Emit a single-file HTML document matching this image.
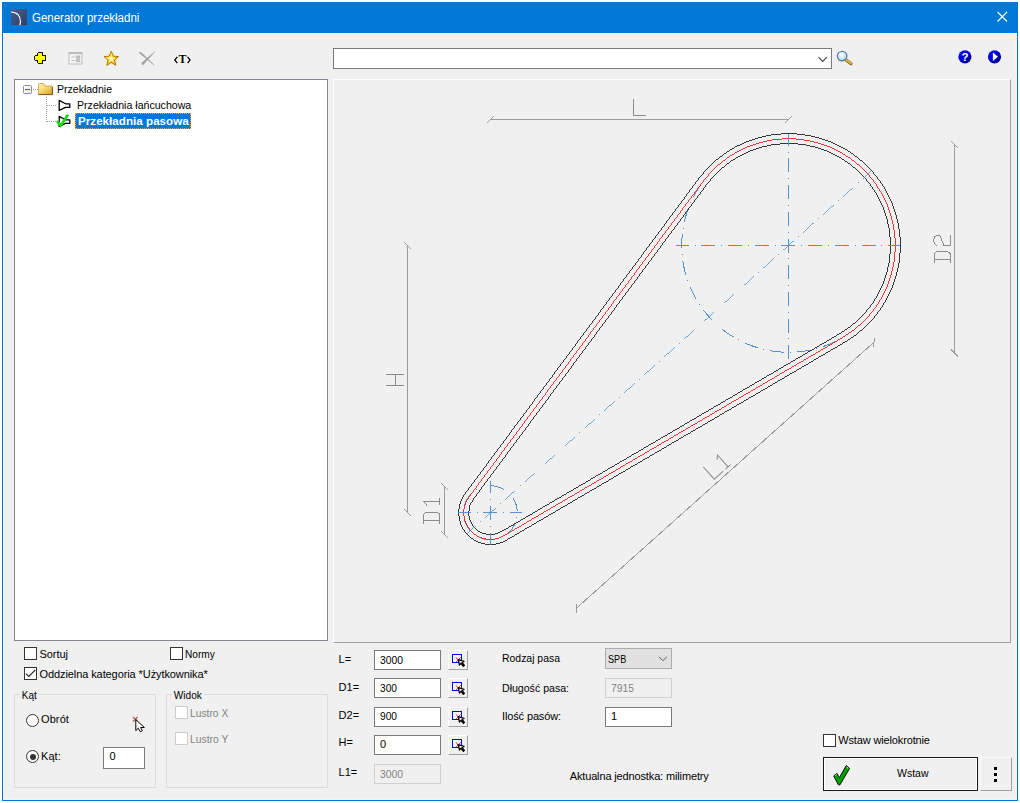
<!DOCTYPE html>
<html lang="pl">
<head>
<meta charset="utf-8">
<title>Generator przekładni</title>
<style>
*{box-sizing:border-box;margin:0;padding:0}
html,body{width:1020px;height:803px;overflow:hidden;background:#fff}
body{font-family:"Liberation Sans",sans-serif;font-size:11px;color:#000;position:relative}
.a{position:absolute}
.t{position:absolute;white-space:nowrap}
.edit{position:absolute;background:#fff;border:1px solid #7a7a7a}
.edit.ro{background:#f0f0f0;border-color:#d0d0d0}
.cb{position:absolute;width:13px;height:13px;background:#fff;border:1px solid #333}
.cb.d{border-color:#cccccc}
.rb{position:absolute;width:13px;height:13px;border-radius:50%;background:#fff;border:1px solid #333}
.grp{position:absolute;border:1px solid #dcdcdc}
.sbtn{position:absolute;width:20px;height:20px;background:#f0f0f0;border:1px solid;border-color:#fff #a0a0a0 #a0a0a0 #fff}
svg{position:absolute;overflow:visible}
</style>
</head>
<body>
<!-- window frame -->
<div class="a" style="left:2px;top:2px;width:1016px;height:799px;background:#f0f0f0;border:1px solid #0078d7"></div>
<div class="a" style="left:2px;top:2px;width:1016px;height:31px;background:#0078d7"></div>
<div class="a" style="left:3px;top:33px;width:1014px;height:1px;background:#fbf9f7"></div>
<div class="a" style="left:1015px;top:34px;width:2px;height:766px;background:#f5f2f0"></div>
<div class="a" style="left:3px;top:798px;width:1014px;height:2px;background:#f5f2f0"></div>

<!-- tree panel -->
<div class="a" style="left:14px;top:79px;width:314px;height:562px;background:#fff;border:1px solid #828790"></div>
<!-- selected row -->
<div class="a" style="left:75px;top:113px;width:116px;height:16px;background:#0078d7;outline:1px dotted #e8a060;outline-offset:-1px"></div>

<!-- search combo -->
<div class="a" style="left:333px;top:48px;width:499px;height:21px;background:#fff;border:1px solid #7a7a7a"></div>

<!-- drawing panel -->
<div class="a" style="left:333px;top:79px;width:678px;height:564px;background:#f0f0f0;border:1px solid;border-color:#fff #a0a0a0 #a0a0a0 #fff"></div>

<!-- left-bottom controls -->
<div class="cb" style="left:24px;top:647px"></div>
<div class="cb" style="left:170px;top:647px"></div>
<div class="cb" style="left:24px;top:667px"></div>
<div class="grp" style="left:14px;top:694px;width:142px;height:94px"></div>
<div class="grp" style="left:166px;top:694px;width:162px;height:94px"></div>
<div class="rb" style="left:26px;top:714px"></div>
<div class="rb" style="left:26px;top:750px"></div>
<div class="a" style="left:29.5px;top:753.5px;width:6.4px;height:6.4px;border-radius:50%;background:#333"></div>
<div class="edit" style="left:103px;top:747px;width:42px;height:22px"></div>
<div class="cb d" style="left:174.5px;top:706px"></div>
<div class="cb d" style="left:174.5px;top:731.5px"></div>

<!-- parameter inputs -->
<div class="edit" style="left:374px;top:650px;width:67px;height:20px"></div>
<div class="edit" style="left:374px;top:678px;width:67px;height:20px"></div>
<div class="edit" style="left:374px;top:707px;width:67px;height:20px"></div>
<div class="edit" style="left:374px;top:735px;width:67px;height:20px"></div>
<div class="edit ro" style="left:374px;top:764px;width:67px;height:20px"></div>
<div class="sbtn" style="left:448px;top:650px"></div>
<div class="sbtn" style="left:448px;top:678px"></div>
<div class="sbtn" style="left:448px;top:707px"></div>
<div class="sbtn" style="left:448px;top:735px"></div>

<!-- belt settings -->
<div class="a" style="left:605px;top:648px;width:67px;height:21px;background:#e1e1e1;border:1px solid #adadad"></div>
<div class="edit ro" style="left:605px;top:678px;width:67px;height:20px"></div>
<div class="edit" style="left:605px;top:707px;width:67px;height:20px"></div>

<!-- insert -->
<div class="cb" style="left:823px;top:734px"></div>
<div class="a" style="left:823px;top:757px;width:155px;height:34px;background:#f0f0f0;border:1px solid #1a1a1a;box-shadow:inset 0 0 0 1px #fff"></div>
<div class="a" style="left:980px;top:757px;width:32px;height:34px;background:#f0f0f0;border:1px solid;border-color:#fbfbfb #a0a0a0 #a0a0a0 #fbfbfb"></div>
<div class="a" style="left:994px;top:767px;width:3px;height:3px;background:#000"></div>
<div class="a" style="left:994px;top:773px;width:3px;height:3px;background:#000"></div>
<div class="a" style="left:994px;top:779px;width:3px;height:3px;background:#000"></div>

<!-- text -->
<div class="t" style="left:32.4px;top:10.8px;font-size:12px;line-height:14px;color:#fff;transform:scaleX(0.958);transform-origin:0 0;">Generator przekładni</div>
<div class="t" style="left:57.2px;top:82.5px;font-size:11px;line-height:13px;transform:scaleX(0.957);transform-origin:0 0;">Przekładnie</div>
<div class="t" style="left:76.6px;top:98.6px;font-size:11px;line-height:13px;transform:scaleX(0.963);transform-origin:0 0;">Przekładnia łańcuchowa</div>
<div class="t" style="left:78.0px;top:114.2px;font-size:11.6px;line-height:13.6px;letter-spacing:0.03px;font-weight:700;color:#fff;">Przekładnia pasowa</div>
<div class="t" style="left:39.5px;top:648.0px;font-size:11px;line-height:13px;letter-spacing:-0.07px;">Sortuj</div>
<div class="t" style="left:185.0px;top:648.0px;font-size:11px;line-height:13px;transform:scaleX(0.920);transform-origin:0 0;">Normy</div>
<div class="t" style="left:39.5px;top:667.5px;font-size:11px;line-height:13px;letter-spacing:-0.09px;">Oddzielna kategoria *Użytkownika*</div>
<div class="t" style="left:22.4px;top:688.5px;font-size:11px;line-height:13px;transform:scaleX(0.908);transform-origin:0 0;background:#f0f0f0;padding:0 2px;margin-left:-2px">Kąt</div>
<div class="t" style="left:174.0px;top:688.5px;font-size:11px;line-height:13px;transform:scaleX(0.916);transform-origin:0 0;background:#f0f0f0;padding:0 2px;margin-left:-2px">Widok</div>
<div class="t" style="left:41.0px;top:713.4px;font-size:11px;line-height:13px;letter-spacing:0.10px;">Obrót</div>
<div class="t" style="left:41.0px;top:749.7px;font-size:11px;line-height:13px;letter-spacing:0.06px;">Kąt:</div>
<div class="t" style="left:109.5px;top:749.7px;font-size:11px;line-height:13px;">0</div>
<div class="t" style="left:189.6px;top:707.0px;font-size:11px;line-height:13px;color:#838383;transform:scaleX(0.935);transform-origin:0 0;">Lustro X</div>
<div class="t" style="left:189.6px;top:732.5px;font-size:11px;line-height:13px;color:#838383;transform:scaleX(0.939);transform-origin:0 0;">Lustro Y</div>
<div class="t" style="left:338.6px;top:652.7px;font-size:11px;line-height:13px;letter-spacing:-0.02px;">L=</div>
<div class="t" style="left:338.6px;top:681.0px;font-size:11px;line-height:13px;">D1=</div>
<div class="t" style="left:338.6px;top:709.0px;font-size:11px;line-height:13px;">D2=</div>
<div class="t" style="left:338.6px;top:736.3px;font-size:11px;line-height:13px;letter-spacing:0.06px;">H=</div>
<div class="t" style="left:338.6px;top:766.1px;font-size:11px;line-height:13px;letter-spacing:-0.06px;">L1=</div>
<div class="t" style="left:380.0px;top:653.7px;font-size:11px;line-height:13px;transform:scaleX(0.939);transform-origin:0 0;">3000</div>
<div class="t" style="left:380.0px;top:681.9px;font-size:11px;line-height:13px;transform:scaleX(0.926);transform-origin:0 0;">300</div>
<div class="t" style="left:380.0px;top:710.4px;font-size:11px;line-height:13px;transform:scaleX(0.926);transform-origin:0 0;">900</div>
<div class="t" style="left:380.0px;top:738.3px;font-size:11px;line-height:13px;">0</div>
<div class="t" style="left:380.0px;top:767.7px;font-size:11px;line-height:13px;color:#838383;transform:scaleX(0.939);transform-origin:0 0;">3000</div>
<div class="t" style="left:502.0px;top:651.6px;font-size:11px;line-height:13px;transform:scaleX(0.948);transform-origin:0 0;">Rodzaj pasa</div>
<div class="t" style="left:502.0px;top:681.5px;font-size:11px;line-height:13px;transform:scaleX(0.961);transform-origin:0 0;">Długość pasa:</div>
<div class="t" style="left:502.0px;top:710.4px;font-size:11px;line-height:13px;letter-spacing:-0.13px;">Ilość pasów:</div>
<div class="t" style="left:608.0px;top:652.6px;font-size:11px;line-height:13px;transform:scaleX(0.827);transform-origin:0 0;">SPB</div>
<div class="t" style="left:611.0px;top:681.5px;font-size:11px;line-height:13px;color:#838383;transform:scaleX(0.939);transform-origin:0 0;">7915</div>
<div class="t" style="left:611.0px;top:710.4px;font-size:11px;line-height:13px;">1</div>
<div class="t" style="left:569.7px;top:770.1px;font-size:11px;line-height:13px;letter-spacing:-0.14px;">Aktualna jednostka: milimetry</div>
<div class="t" style="left:838.2px;top:734.0px;font-size:11px;line-height:13px;letter-spacing:-0.14px;">Wstaw wielokrotnie</div>
<div class="t" style="left:896.5px;top:767.3px;font-size:11px;line-height:13px;transform:scaleX(0.955);transform-origin:0 0;">Wstaw</div>
<!-- icons -->
<svg style="left:0;top:0" width="1020" height="803" viewBox="0 0 1020 803">
<defs>
<linearGradient id="gTi" x1="0" y1="0" x2="1" y2="1"><stop offset="0" stop-color="#4a5f92"/><stop offset="1" stop-color="#2c3d66"/></linearGradient>
<linearGradient id="gFo" x1="0" y1="0" x2="1" y2="1"><stop offset="0" stop-color="#fff3bf"/><stop offset=".5" stop-color="#f6d36a"/><stop offset="1" stop-color="#dc9a2a"/></linearGradient>
<linearGradient id="gSt" x1="0" y1="0" x2="1" y2="1"><stop offset="0" stop-color="#fff6a0"/><stop offset=".5" stop-color="#ffd21e"/><stop offset="1" stop-color="#e59a00"/></linearGradient>
<radialGradient id="gLe" cx=".4" cy=".35" r=".7"><stop offset="0" stop-color="#ffffff"/><stop offset="1" stop-color="#a9d3f0"/></radialGradient>
<linearGradient id="gBl" x1="0" y1="0" x2="1" y2="1"><stop offset="0" stop-color="#1010ff"/><stop offset=".55" stop-color="#0000d0"/><stop offset="1" stop-color="#000060"/></linearGradient>
<linearGradient id="gBx" x1="0" y1="0" x2="1" y2="1"><stop offset="0" stop-color="#ffffff"/><stop offset="1" stop-color="#e4e4e4"/></linearGradient>
</defs>

<!-- title icon -->
<rect x="11" y="9" width="16" height="16" fill="url(#gTi)"/>
<path d="M11,12 C17,12 20.5,16 20.5,21.5 C20.5,23 20.2,24 19.6,25" fill="none" stroke="#fff" stroke-width="1.2"/>
<!-- close X -->
<path d="M997.5,12 L1007,21.5 M1007,12 L997.5,21.5" stroke="#fff" stroke-width="1.1" fill="none"/>

<!-- toolbar: yellow plus -->
<g shape-rendering="crispEdges"><path d="M38,52 H42 L43,53 V55 H45 L46,56 V60 L45,61 H43 V63 L42,64 H38 L37,63 V61 H35 L34,60 V56 L35,55 H37 V53Z" fill="#15153a"/><path d="M38,53 H42 V56 H45 V60 H42 V63 H38 V60 H35 V56 H38Z" fill="#ffff00"/></g>
<!-- toolbar: disabled form icon -->
<g fill="none" stroke="#bcbcbc">
<rect x="69" y="52.5" width="13" height="11.5" fill="#f7f7f7"/>
<path d="M69,53.5 H82" stroke-width="1.3"/>
<path d="M71.5,57 H74.5 M71.5,60.5 H74.5"/>
<rect x="76.3" y="56" width="3.4" height="2.2" fill="#c4c4c4"/>
<rect x="76.3" y="59.6" width="3.4" height="2.2" fill="#c4c4c4"/>
</g>
<!-- toolbar: star -->
<path d="M111.3,51 L113.4,56.2 L118.6,56.6 L114.6,60 L115.9,65.4 L111.3,62.5 L106.7,65.4 L108,60 L104,56.6 L109.2,56.2Z" fill="url(#gSt)" stroke="#b47a00" stroke-width="1" stroke-linejoin="round"/>
<path d="M111.3,54.6 L112.5,57.4 L115.4,57.7 L113.2,59.6 L113.9,62.4 L111.3,60.8 L108.7,62.4 L109.4,59.6 L107.2,57.7 L110.1,57.4Z" fill="#fff8c8" fill-opacity=".85"/>
<!-- toolbar: disabled X -->
<path d="M139,51.9 L141.6,52.6 L154.7,65.2 L154.1,65.5 L139.6,53.4Z" fill="#a4a4a4"/>
<path d="M154.6,51.4 L154.9,52 L143.3,65 L141.2,64.5 L141.9,62.5Z" fill="#a4a4a4"/>
<!-- toolbar: <T> -->
<text x="182.4" y="63.4" font-family="Liberation Serif" font-weight="700" font-size="13.5" text-anchor="middle" fill="#000" stroke="#fff" stroke-width="1.4" stroke-opacity=".8" paint-order="stroke" textLength="8" lengthAdjust="spacingAndGlyphs">T</text>
<path d="M177.3,56.8 L174.8,60 L177.3,63.2 M187.6,56.8 L190.1,60 L187.6,63.2" fill="none" stroke="#fff" stroke-width="3" stroke-opacity=".8"/><path d="M177.3,56.8 L174.8,60 L177.3,63.2 M187.6,56.8 L190.1,60 L187.6,63.2" fill="none" stroke="#000" stroke-width="1.3"/>

<!-- combo chevron -->
<path d="M818.5,57.2 L822.7,61.4 L826.9,57.2" fill="none" stroke="#444" stroke-width="1.1"/>
<!-- magnifier -->
<path d="M845.9,59.7 L851,63.7" stroke="#8a6a1a" stroke-width="3.2" stroke-linecap="round"/>
<path d="M845.9,59.5 L850.9,63.4" stroke="#e0b840" stroke-width="1.8" stroke-linecap="round"/>
<circle cx="842.1" cy="56.1" r="4.7" fill="url(#gLe)" stroke="#5e7ea8" stroke-width="1.4"/>
<!-- help + arrow -->
<circle cx="964.9" cy="56.8" r="6.6" fill="url(#gBl)"/>
<text x="964.9" y="61.1" font-family="Liberation Sans" font-weight="700" font-size="11.5" text-anchor="middle" fill="#fff">?</text>
<circle cx="994.5" cy="56.8" r="6.6" fill="url(#gBl)"/>
<path d="M992.9,52.6 V61 L998,56.8Z" fill="#fff"/>

<!-- tree: expander, folder, connectors -->
<rect x="23.5" y="85.5" width="8" height="8" rx="1" fill="url(#gBx)" stroke="#919191"/>
<path d="M25,89.5 H30" stroke="#3c55b4" stroke-width="1"/>
<g stroke="#a0a0a0" stroke-dasharray="1 1" shape-rendering="crispEdges" fill="none">
<path d="M33,89.5 H38"/>
<path d="M46.5,97 V121.5"/>
<path d="M47,105.5 H57"/>
<path d="M47,121.5 H57"/>
</g>
<path d="M38.5,94.3 V84.3 Q38.5,83.5 39.3,83.5 H43.2 Q43.9,83.5 44.3,84.2 L45.2,86 H51.5 Q52.3,86 52.3,86.8 V94.3Z" fill="url(#gFo)" stroke="#c89a3a" stroke-width=".8"/>
<path d="M38.5,94.6 H52.5 V87" fill="none" stroke="#6e5a28" stroke-width="1"/>
<!-- tree item icons -->
<path d="M59.2,100.4 L65.6,103.8 H69.8 V107.4 H65.6 L59.2,110.4Z" fill="#fff" stroke="#000" stroke-width="1.3" stroke-linejoin="round"/>
<path d="M59.2,116.4 L65.6,119.8 H69.8 V123.4 H65.6 L59.2,126.4Z" fill="#fff" stroke="#000" stroke-width="1.3" stroke-linejoin="round"/>
<path d="M57,121 L60.7,125.6 L68,114.6" fill="none" stroke="#08e008" stroke-width="2.6" stroke-linejoin="miter"/>

<!-- checkbox tick -->
<path d="M25.9,673.6 L28.8,676.4 L35.4,669.9" fill="none" stroke="#222" stroke-width="1.2"/>

<!-- mouse cursor with red cross -->
<path d="M132.8,716.8 L137.8,721.6 M137.6,716.8 L133,721.6" stroke="#b44444" stroke-width="1.1" fill="none"/>
<path d="M135.8,719.6 V730.6 L138.3,728.2 L140.3,731.8 L142.4,730.8 L140.6,727.5 H144.4Z" fill="#fff" stroke="#000" stroke-width="1" stroke-linejoin="miter"/>

<!-- picker button glyphs -->
<g transform="translate(0,0)">
<rect x="452.5" y="654.5" width="9" height="8" fill="#f4fbfb" stroke="#0000ff"/>
<path d="M456,657.3 L459.4,661.8 M460.7,657.3 L456.2,662" stroke="#ff2020" stroke-width="1" fill="none"/>
<path d="M458.4,659.6 L459.4,665 L460.9,663.4 L463.4,666.2 L464.4,665.3 L462,662.5 L464,661.4Z" fill="#fff" stroke="#000" stroke-width="1.3" stroke-linejoin="round"/>
</g>
<g transform="translate(0,28)">
<rect x="452.5" y="654.5" width="9" height="8" fill="#f4fbfb" stroke="#0000ff"/>
<path d="M456,657.3 L459.4,661.8 M460.7,657.3 L456.2,662" stroke="#ff2020" stroke-width="1" fill="none"/>
<path d="M458.4,659.6 L459.4,665 L460.9,663.4 L463.4,666.2 L464.4,665.3 L462,662.5 L464,661.4Z" fill="#fff" stroke="#000" stroke-width="1.3" stroke-linejoin="round"/>
</g>
<g transform="translate(0,57)">
<rect x="452.5" y="654.5" width="9" height="8" fill="#f4fbfb" stroke="#0000ff"/>
<path d="M456,657.3 L459.4,661.8 M460.7,657.3 L456.2,662" stroke="#ff2020" stroke-width="1" fill="none"/>
<path d="M458.4,659.6 L459.4,665 L460.9,663.4 L463.4,666.2 L464.4,665.3 L462,662.5 L464,661.4Z" fill="#fff" stroke="#000" stroke-width="1.3" stroke-linejoin="round"/>
</g>
<g transform="translate(0,85)">
<rect x="452.5" y="654.5" width="9" height="8" fill="#f4fbfb" stroke="#0000ff"/>
<path d="M456,657.3 L459.4,661.8 M460.7,657.3 L456.2,662" stroke="#ff2020" stroke-width="1" fill="none"/>
<path d="M458.4,659.6 L459.4,665 L460.9,663.4 L463.4,666.2 L464.4,665.3 L462,662.5 L464,661.4Z" fill="#fff" stroke="#000" stroke-width="1.3" stroke-linejoin="round"/>
</g>


<!-- SPB combo chevron -->
<path d="M659,656.8 L662.9,660.7 L666.8,656.8" fill="none" stroke="#5a5a5a" stroke-width="1"/>

<!-- Wstaw checkmark -->
<path d="M833.7,775.9 L836.8,773.4 L839.4,777.6 L846.3,765.5 L849.6,768.4 L840,784.8 H838.3Z" fill="#00a000" stroke="#111" stroke-width="1" stroke-linejoin="round"/>
<path d="M835.2,775.7 L836.6,774.6 M846.6,767 L848.2,768.4" stroke="#e8d8e8" stroke-width="1"/>
</svg>

<!-- drawing -->
<svg style="left:0;top:0" width="1020" height="803" viewBox="0 0 1020 803" fill="none" stroke-width="1" shape-rendering="crispEdges">
<g stroke="#5892ce" stroke-dasharray="14 5.85 1 5.85">
<path d="M682.29,234.34 A106.8,106.8 0 0 0 847.18,334.74"/>
<path d="M682.29,234.34 A106.8,106.8 0 0 1 706.17,177.48" stroke-dashoffset="14"/>
<path d="M490.40,485.80 A27,27 0 0 1 495.09,539.39 A27,27 0 0 1 481.17,487.43"/>
</g>
<path d="M464.94,493.92 L698.62,178.84 A111.90,111.90 0 1 1 845.00,342.09 L506.41,540.16 A31.70,31.70 0 0 1 464.94,493.92Z" stroke="#202020" stroke-width=".9"/>
<path d="M472.89,499.81 L706.57,184.74 A102.00,102.00 0 1 1 840.00,333.54 L501.41,531.62 A21.80,21.80 0 0 1 472.89,499.81Z" stroke="#202020" stroke-width=".9"/>
<path d="M469.03,496.95 L702.72,181.88 A106.80,106.80 0 1 1 842.43,337.69 L503.83,535.76 A26.60,26.60 0 0 1 469.03,496.95Z" stroke="#f02020" stroke-width=".9"/>
<g stroke="#5892ce" stroke-dasharray="14 5.85 1 5.85">
<path d="M675.6,245.5 H900.3" stroke-dashoffset="0.90"/>
<path d="M788.5,134.0 V359.7" stroke-dashoffset="2.30"/>
<path d="M458.4,512.8 H522.4" stroke-dashoffset="1.70"/>
<path d="M490.4,481.0 V544.6" stroke-dashoffset="1.90"/>
<path d="M467.32,533.50 L871.14,171.40" stroke-dashoffset="2.70" stroke-width=".8"/>
</g>
<path d="M490.3,119.5 H788.7 M486.9,122.9 L493.7,116.1 M785.3,122.9 L792.1,116.1 M407.5,245.6 V512.5 M404.1,242.2 L410.9,249.0 M404.1,509.1 L410.9,515.9 M444.5,486.3 V534.5 M441.1,482.9 L447.9,489.7 M441.1,531.1 L447.9,537.9 M954.5,144.3 V352.9 M951.1,140.9 L957.9,147.7 M951.1,349.5 L957.9,356.3 M576.4,608.2 L874.0,342.2 M576.4,603.8000000000001 V612.6 M874.3,337.7 L873.7,346.7" stroke="#9c9c9c"/>
<g stroke="#8c8c8c" stroke-linecap="square">
<path d="M0,-16 V0 H11.5" transform="translate(633.8,115.5)"/>
<path d="M0,-16.5 V0 M11,-16.5 V0 M0,-8.2 H11" transform="translate(403.3,385.2) rotate(-90)"/>
<path d="M0,-16 H9 L11,-13.5 V-2.5 L9,0 H0 M3,-16 V0" transform="translate(439.7,523.2) rotate(-90)"/>
<path d="M-3.3,-12.8 L0,-16 V0 M-3,0 H3" transform="translate(439.7,501.9) rotate(-90)"/>
<path d="M0,-16 H9 L11,-13.5 V-2.5 L9,0 H0 M3,-16 V0" transform="translate(950.1,262.5) rotate(-90)"/>
<path d="M0,-13.7 L2.1,-15.7 L5.2,-16.4 L8.9,-15.4 L10.7,-12.3 L9.3,-9.6 L5.2,-8.2 L0,-6.1 V0 H10.3" transform="translate(950.1,245.7) rotate(-90)"/>
<path d="M0,-16 V0 H11.5" transform="translate(714.3,479.2) rotate(-41.79)"/>
<path d="M-3.3,-12.8 L0,-16 V0 M-3,0 H3" transform="translate(714.3,479.2) rotate(-41.79) translate(18.5,0)"/>
</g>
</svg>

</body>
</html>
